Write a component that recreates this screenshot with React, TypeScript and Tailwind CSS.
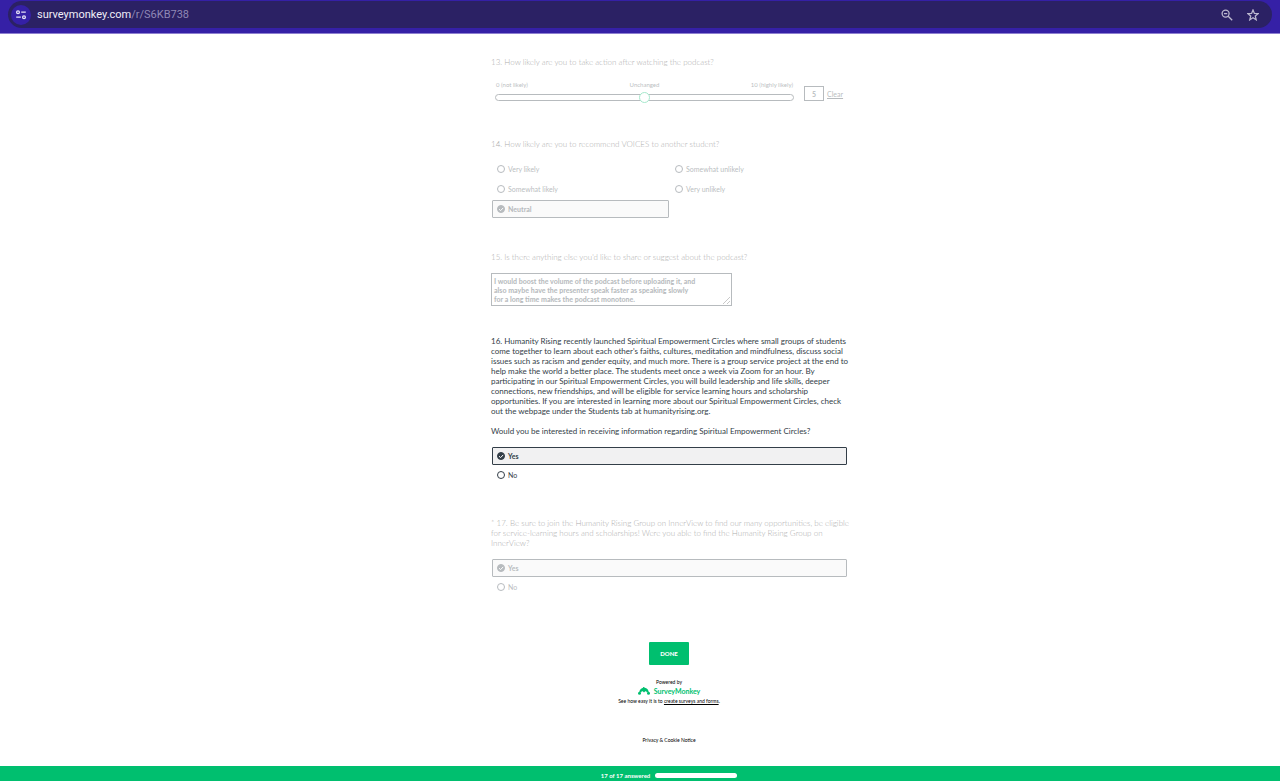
import { useState } from "react";
import type { ReactNode } from "react";
import clsx from "clsx";

type OptionProps = {
  name: string;
  label: string;
  value: string | null;
  onSelect: (label: string) => void;
  boldWhenSelected?: boolean;
};

function RadioOption({ name, label, value, onSelect, boldWhenSelected }: OptionProps) {
  const checked = value === label;
  return (
    <label
      className={clsx(
        "flex h-[18px] items-center gap-[3px] rounded-[1px] border px-1 text-[7px] font-normal",
        checked ? "border-[#333e48] bg-[#f1f1f2]" : "border-transparent",
      )}
    >
      <span className="grid size-2 shrink-0">
        <input
          type="radio"
          name={name}
          checked={checked}
          onChange={() => onSelect(label)}
          className="size-2 appearance-none rounded-full border border-[#333e48] bg-white checked:bg-[#333e48] [grid-area:1/1]"
        />
        {checked && (
          <svg viewBox="0 0 8 8" className="pointer-events-none size-2 [grid-area:1/1]" aria-hidden="true">
            <path d="M2 4.2 3.6 5.6 6.2 2.9" fill="none" stroke="#fff" strokeWidth="1" />
          </svg>
        )}
      </span>
      <span className={clsx(checked && (boldWhenSelected ? "font-black" : "font-bold"))}>{label}</span>
    </label>
  );
}

function Question({ children, faded }: { children: ReactNode; faded?: boolean }) {
  return <section className={clsx(faded && "opacity-35")}>{children}</section>;
}

function AddressBar() {
  return (
    <header className="flex h-[34px] shrink-0 flex-col border-b border-[#8d7fd0] bg-[#3520a6] px-2 pt-px">
      <div className="flex h-[27px] items-center rounded-full bg-[#2b2164] pr-[13px] pl-[3px]">
        <button type="button" aria-label="Site information" className="flex size-5 items-center justify-center rounded-full bg-[#3520a6]">
          <svg viewBox="0 0 12 12" className="size-3" fill="none" stroke="#e4e0f5" strokeWidth="1.3">
            <circle cx="3" cy="3.2" r="1.4" />
            <path d="M6.2 3.2H10.8M1.2 8.2h4.6" />
            <circle cx="9" cy="8.2" r="1.4" />
          </svg>
        </button>
        <p className="ml-1.5 flex-1 font-['Roboto',sans-serif] text-[11px] leading-4 text-[#8f88b5]">
          <span className="text-[#f0eef8]">surveymonkey.com</span>/r/S6KB738
        </p>
        <div className="flex gap-3.5 text-[#bcb8cf]">
          <button type="button" aria-label="Zoom">
            <svg viewBox="0 0 12 12" className="size-3" fill="none" stroke="currentColor" strokeWidth="1.3">
              <circle cx="4.6" cy="4.6" r="3.5" />
              <path d="M7.2 7.2 11.2 11.2M3 4.6h3.2" />
            </svg>
          </button>
          <button type="button" aria-label="Bookmark this page">
            <svg viewBox="0 0 12 12" className="size-3" fill="none" stroke="currentColor" strokeWidth="1.3">
              <path d="M6 1 7.4 4.4 11.1 4.7 8.3 7.1 9.2 10.8 6 8.8 2.8 10.8 3.7 7.1.9 4.7 4.6 4.4Z" />
            </svg>
          </button>
        </div>
      </div>
    </header>
  );
}

function Logo() {
  return (
    <div className="flex h-2 items-center gap-1 text-[#00bf6f]">
      <svg viewBox="0 0 24 16" className="h-2 w-3" fill="currentColor" aria-hidden="true">
        <circle cx="3" cy="12.5" r="3" />
        <circle cx="21" cy="12.5" r="3" />
        <path d="M2.5 10C3.5 5 7 2 10.5 1.6L9.6 0c2 0 3.6.6 4.2 1.7C17.5 2.2 20.5 5 21.5 10L17.8 11C17 8.5 15.5 7.6 14 9l-2 2-2-2C8.5 7.6 7 8.5 6.2 11Z" />
      </svg>
      <span className="text-[7px] leading-[8px] font-bold">SurveyMonkey</span>
    </div>
  );
}

export default function App() {
  const [rating, setRating] = useState(5);
  const [recommend, setRecommend] = useState<string | null>("Neutral");
  const [suggestion, setSuggestion] = useState(
    "I would boost the volume of the podcast before uploading it, and\nalso maybe have the presenter speak faster as speaking slowly\nfor a long time makes the podcast monotone.",
  );
  const [circles, setCircles] = useState<string | null>("Yes");
  const [group, setGroup] = useState<string | null>("Yes");

  return (
    <div className="flex min-h-screen flex-col bg-white font-['Lato',sans-serif] text-[7px] leading-[10px] text-[#333e48]">
      <AddressBar />

      <main className="flex flex-1 flex-col items-center pl-[58px]">
        <form className="flex w-full max-w-[356px] flex-col pt-[23px]" onSubmit={(e) => e.preventDefault()}>
          <Question faded>
            <label htmlFor="rating" className="block text-[8px] font-light text-black">
              13. How likely are you to take action after watching the podcast?
            </label>
            <div className="mt-3.5 flex items-end gap-2.5 pl-1">
              <div className="w-[299px]">
                <div className="grid grid-cols-3 px-px text-[6px] leading-[8px]">
                  <span>0 (not likely)</span>
                  <span className="text-center">Unchanged</span>
                  <span className="text-right">10 (highly likely)</span>
                </div>
                <input
                  id="rating"
                  type="range"
                  min={0}
                  max={10}
                  value={rating}
                  onChange={(e) => setRating(Number(e.target.value))}
                  className="mt-0.5 block h-3 w-full appearance-none bg-transparent [&::-webkit-slider-runnable-track]:h-[7px] [&::-webkit-slider-runnable-track]:rounded-full [&::-webkit-slider-runnable-track]:border [&::-webkit-slider-runnable-track]:border-[#333e48] [&::-webkit-slider-thumb]:-mt-[3px] [&::-webkit-slider-thumb]:size-[11px] [&::-webkit-slider-thumb]:appearance-none [&::-webkit-slider-thumb]:rounded-full [&::-webkit-slider-thumb]:border [&::-webkit-slider-thumb]:border-[#00bf6f] [&::-webkit-slider-thumb]:bg-white"
                />
              </div>
              <div className="flex items-center gap-[3px] pb-0.5">
                <input
                  aria-label="Rating value"
                  value={rating}
                  onChange={(e) => setRating(Number(e.target.value) || 0)}
                  className="h-[15px] w-5 border border-[#333e48] text-center font-bold"
                />
                <button type="button" onClick={() => setRating(5)} className="underline">
                  Clear
                </button>
              </div>
            </div>
          </Question>

          <div className="mt-9">
            <Question faded>
              <fieldset className="min-w-0">
                <legend className="text-[8px] font-light text-black">
                  14. How likely are you to recommend VOICES to another student?
                </legend>
                <div className="mt-[11px] grid grid-flow-col grid-cols-2 grid-rows-3 gap-x-px gap-y-0.5 pl-px">
                  {["Very likely", "Somewhat likely", "Neutral", "Somewhat unlikely", "Very unlikely"].map((label) => (
                    <RadioOption key={label} name="recommend" label={label} value={recommend} onSelect={setRecommend} boldWhenSelected />
                  ))}
                </div>
              </fieldset>
            </Question>
          </div>

          <div className="mt-[34px]">
            <Question faded>
              <label htmlFor="suggestion" className="block text-[8px] font-light text-black">
                15. Is there anything else you'd like to share or suggest about the podcast?
              </label>
              <textarea
                id="suggestion"
                value={suggestion}
                onChange={(e) => setSuggestion(e.target.value)}
                className="mt-[11px] block h-[33px] w-[241px] overflow-hidden border border-[#333e48] px-0.5 py-[3px] leading-[9px] font-black whitespace-pre"
              />
            </Question>
          </div>

          <div className="mt-[30px]">
            <Question>
              <fieldset className="min-w-0">
                <legend className="text-[8px] whitespace-pre">
                  {`16. Humanity Rising recently launched Spiritual Empowerment Circles where small groups of students
come together to learn about each other's faiths, cultures, meditation and mindfulness, discuss social
issues such as racism and gender equity, and much more. There is a group service project at the end to
help make the world a better place. The students meet once a week via Zoom for an hour. By
participating in our Spiritual Empowerment Circles, you will build leadership and life skills, deeper
connections, new friendships, and will be eligible for service learning hours and scholarship
opportunities. If you are interested in learning more about our Spiritual Empowerment Circles, check
out the webpage under the Students tab at humanityrising.org.

Would you be interested in receiving information regarding Spiritual Empowerment Circles?`}
                </legend>
                <div className="mt-[11px] flex flex-col gap-px pl-px">
                  {["Yes", "No"].map((label) => (
                    <RadioOption key={label} name="circles" label={label} value={circles} onSelect={setCircles} />
                  ))}
                </div>
              </fieldset>
            </Question>
          </div>

          <div className="mt-[34px]">
            <Question faded>
              <fieldset className="min-w-0">
                <legend className="text-[8px] font-light whitespace-pre text-black">
                  {`* 17. Be sure to join the Humanity Rising Group on InnerView to find our many opportunities, be eligible
for service-learning hours and scholarships! Were you able to find the Humanity Rising Group on
InnerView?`}
                </legend>
                <div className="mt-[11px] flex flex-col gap-px pl-px">
                  {["Yes", "No"].map((label) => (
                    <RadioOption key={label} name="group" label={label} value={group} onSelect={setGroup} />
                  ))}
                </div>
              </fieldset>
            </Question>
          </div>

          <button type="submit" className="mt-[46px] h-[23px] w-10 self-center rounded-[1px] bg-[#00bf6f] text-[6px] font-black text-white">
            DONE
          </button>
        </form>

        <footer className="mt-3 flex flex-col items-center text-[5px] leading-[10px] text-black">
          <p>Powered by</p>
          <Logo />
          <p className="mt-px">
            See how easy it is to{" "}
            <a href="#create" className="underline">
              create surveys and forms
            </a>
            .
          </p>
          <a href="#privacy" className="mt-[29px]">
            Privacy &amp; Cookie Notice
          </a>
        </footer>
      </main>

      <div className="flex h-[15px] shrink-0 items-center justify-center gap-[5px] bg-[#00bf6f] pt-1 pl-[58px] text-[6px] leading-[8px] font-bold text-white">
        <span>17 of 17 answered</span>
        <div className="h-[5px] w-[82px] rounded-full bg-white" />
      </div>
    </div>
  );
}
